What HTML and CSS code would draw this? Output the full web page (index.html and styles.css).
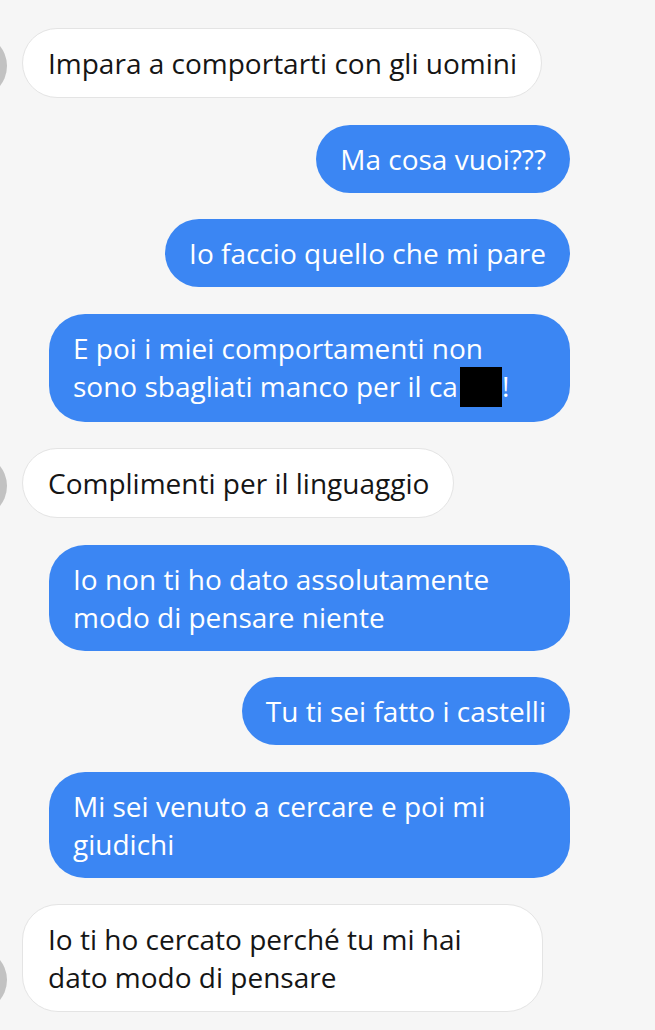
FILE: index.html
```html
<!DOCTYPE html>
<html lang="it">
<head>
<meta charset="utf-8">
<link rel="stylesheet" href="styles.css">
</head>
<body>
<div class="chat">
  <div class="row in">
    <div class="avatar"></div>
    <div class="bubble white">Impara a comportarti con gli uomini</div>
  </div>
  <div class="row out">
    <div class="bubble blue">Ma cosa vuoi???</div>
  </div>
  <div class="row out">
    <div class="bubble blue">Io faccio quello che mi pare</div>
  </div>
  <div class="row out">
    <div class="bubble blue">E poi i miei comportamenti non sono sbagliati manco per il ca<span class="censor"></span>!</div>
  </div>
  <div class="row in">
    <div class="avatar"></div>
    <div class="bubble white">Complimenti per il linguaggio</div>
  </div>
  <div class="row out">
    <div class="bubble blue">Io non ti ho dato assolutamente modo di pensare niente</div>
  </div>
  <div class="row out">
    <div class="bubble blue">Tu ti sei fatto i castelli</div>
  </div>
  <div class="row out">
    <div class="bubble blue">Mi sei venuto a cercare e poi mi giudichi</div>
  </div>
  <div class="row in">
    <div class="avatar"></div>
    <div class="bubble white">Io ti ho cercato perché tu mi hai dato modo di pensare</div>
  </div>
</div>
</body>
</html>
```

FILE: styles.css
```css
html, body {
  margin: 0;
  padding: 0;
  background: #f6f6f6;
}
body {
  font-family: "Open Sans", "Noto Sans", sans-serif;
  font-size: 28px;
  line-height: 38px;
  overflow: hidden;
}
.chat {
  display: flex;
  flex-direction: column;
  gap: 26.5px;
  padding: 28px 85px 0 0;
}
.row {
  display: flex;
  align-items: flex-end;
}
.row.out {
  justify-content: flex-end;
}
.avatar {
  flex: none;
  width: 64px;
  height: 64px;
  border-radius: 50%;
  background: #c2c2c2;
  margin-left: -57px;
  margin-right: 15px;
}
.bubble {
  box-sizing: border-box;
  max-width: 521px;
  padding: 15px 24px;
  border-radius: 36px;
}
.white {
  background: #ffffff;
  border: 1px solid #e4e4e4;
  color: #151515;
  padding: 15px 24px 15px 25px;
}
.blue {
  background: #3b86f3;
  color: #ffffff;
}
.censor {
  display: inline-block;
  width: 42px;
  height: 40px;
  background: #000;
  vertical-align: -10px;
  margin-left: 2px;
}
```
